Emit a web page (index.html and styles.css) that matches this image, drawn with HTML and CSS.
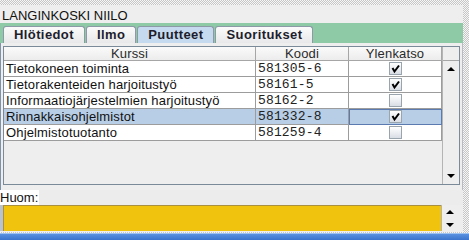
FILE: index.html
```html
<!DOCTYPE html>
<html lang="fi">
<head>
  <title>Langinkoski Niilo</title>
  <meta charset="UTF-8" />
  <meta name="viewport" content="width=device-width" />
  <link rel="stylesheet" href="styles.css">
</head>
<body>
  <div class="app">
    <div class="title">LANGINKOSKI NIILO</div>
    <div class="tabs">
      <div class="tab">Hlötiedot</div>
      <div class="tab">Ilmo</div>
      <div class="tab active">Puutteet</div>
      <div class="tab">Suoritukset</div>
    </div>
    <div class="tab-body">
      <div class="scroll-pane">
        <div class="viewport">
          <div class="row head">
            <div class="cell">Kurssi</div>
            <div class="cell">Koodi</div>
            <div class="cell">Ylenkatso</div>
          </div>
          <div class="row">
            <div class="cell">Tietokoneen toiminta</div>
            <div class="cell code">581305-6</div>
            <div class="cell check"><span class="cb"><svg viewBox="0 0 11 11"><path d="M2.5 5 L4.5 8.5 L9 2.5"/></svg></span></div>
          </div>
          <div class="row">
            <div class="cell">Tietorakenteiden harjoitustyö</div>
            <div class="cell code">58161-5</div>
            <div class="cell check"><span class="cb"><svg viewBox="0 0 11 11"><path d="M2.5 5 L4.5 8.5 L9 2.5"/></svg></span></div>
          </div>
          <div class="row">
            <div class="cell">Informaatiojärjestelmien harjoitustyö</div>
            <div class="cell code">58162-2</div>
            <div class="cell check"><span class="cb"></span></div>
          </div>
          <div class="row selected">
            <div class="cell">Rinnakkaisohjelmistot</div>
            <div class="cell code">581332-8</div>
            <div class="cell check focus"><span class="cb"><svg viewBox="0 0 11 11"><path d="M2.5 5 L4.5 8.5 L9 2.5"/></svg></span></div>
          </div>
          <div class="row">
            <div class="cell">Ohjelmistotuotanto</div>
            <div class="cell code">581259-4</div>
            <div class="cell check"><span class="cb"></span></div>
          </div>
        </div>
        <div class="vbar">
          <div class="corner"></div>
          <div class="track">
            <div class="arrow up"></div>
            <div class="arrow down"></div>
          </div>
        </div>
      </div>
    </div>
    <div class="note-label"><span>Huom:</span></div>
    <div class="note">
      <div class="note-text"></div>
      <div class="note-bar">
        <div class="arrow up"></div>
        <div class="arrow down"></div>
      </div>
    </div>
  </div>
  <div class="taskbar"></div>
</body>
</html>
```

FILE: styles.css
```css
body {
  margin: 0;
  width: 469px;
  height: 240px;
  overflow: hidden;
  display: flex;
  flex-direction: column;
  font-family: "Liberation Sans", Arial, sans-serif;
  font-size: 13px;
  color: #111;
  background: repeating-conic-gradient(#c6c6c6 0 25%, #f6f6f6 0 50%) 0 0 / 2px 2px;
}

.app {
  margin: 5px 6px 0 0;
  height: 227px;
  background: #eeeeee;
  display: flex;
  flex-direction: column;
}

.title {
  height: 18px;
  box-sizing: border-box;
  padding: 4px 0 0 2px;
  line-height: 14px;
}

/* tab strip */
.tabs {
  height: 20px;
  background: #8fcaa7;
  display: flex;
  align-items: flex-end;
  gap: 1px;
  padding-left: 3px;
}

.tab {
  height: 17px;
  box-sizing: border-box;
  padding: 0 10px;
  border: 1px solid #8d99a6;
  border-bottom: none;
  border-radius: 3px 3px 0 0;
  background: linear-gradient(#fbfbfb, #e8e8ea);
  font-weight: bold;
  color: #1d1d2c;
  line-height: 16px;
  letter-spacing: 0.4px;
}

.tab.active {
  background: #c6daef;
}

.tab-body {
  height: 147px;
  box-sizing: border-box;
  padding: 3px 2px 5px 2px;
  border-left: 1px solid #7f93a8;
  border-right: 1px solid #b7bcc2;
}

.scroll-pane {
  height: 100%;
  box-sizing: border-box;
  border: 1px solid #7a8a99;
  display: flex;
}

.viewport {
  flex: 1;
  background: #eeeeee;
}

.row {
  display: grid;
  grid-template-columns: 252px 93px 93px;
  height: 16px;
  background: #fff;
}

.cell {
  box-sizing: border-box;
  border-right: 1px solid #9c9c9c;
  border-bottom: 1px solid #9c9c9c;
  padding: 0 2px;
  line-height: 15px;
  white-space: nowrap;
  overflow: hidden;
  letter-spacing: 0.15px;
}

.row.head {
  height: 14px;
}

.head .cell {
  background: linear-gradient(#fafafa, #ececec);
  border-color: #a6a6a6;
  text-align: center;
  line-height: 13px;
  color: #2a2a2a;
}

.cell.code {
  font-family: "Liberation Mono", "Courier New", monospace;
  color: #222;
}

.cell.check {
  display: flex;
  justify-content: center;
  align-items: center;
}

.row.selected {
  background: #b8cee6;
}

.cell.focus {
  outline: 1px solid #5b7bb0;
  outline-offset: -1px;
}

.cb {
  width: 13px;
  height: 13px;
  box-sizing: border-box;
  border: 1px solid #9aa4ae;
  background: linear-gradient(#ffffff, #d9dee5);
  display: flex;
}

.cb svg {
  width: 11px;
  height: 11px;
}

.cb path {
  fill: none;
  stroke: #000;
  stroke-width: 2;
}

/* scrollbars */
.vbar {
  width: 16px;
  border-left: 1px solid #b4b4b4;
  display: flex;
  flex-direction: column;
}

.corner {
  height: 14px;
  box-sizing: border-box;
  border-bottom: 1px solid #a6a6a6;
  background: #eeeeee;
}

.track {
  flex: 1;
  display: flex;
  flex-direction: column;
  justify-content: space-between;
  background: #eeeeee;
}

.arrow {
  height: 16px;
  display: flex;
  align-items: center;
  justify-content: center;
}

.arrow::before {
  content: "";
  border-left: 4px solid transparent;
  border-right: 4px solid transparent;
}

.arrow.up::before {
  border-bottom: 4px solid #000;
}

.arrow.down::before {
  border-top: 4px solid #000;
}

.note-label {
  height: 15px;
  line-height: 15px;
  background: #ececec;
}

.note-label span {
  background: #fff;
  padding-right: 1px;
}

.note {
  height: 26px;
  display: flex;
  padding-left: 3px;
  background: #b9c3cd;
  margin-right: 5px;
}

.note-text {
  flex: 1;
  background: #f0c40e;
  border-top: 1px solid #a89040;
  border-left: 1px solid #a89040;
}

.note-bar {
  width: 16px;
  border-left: 1px solid #b4b4b4;
  background: #eeeeee;
  display: flex;
  flex-direction: column;
  justify-content: space-between;
}

.note-bar .arrow {
  height: 13px;
}

.taskbar {
  margin-top: 1px;
  height: 7px;
  background: linear-gradient(#9dc2f0 0 1px, #5a92e0 1px, #3a74cc);
}
```
